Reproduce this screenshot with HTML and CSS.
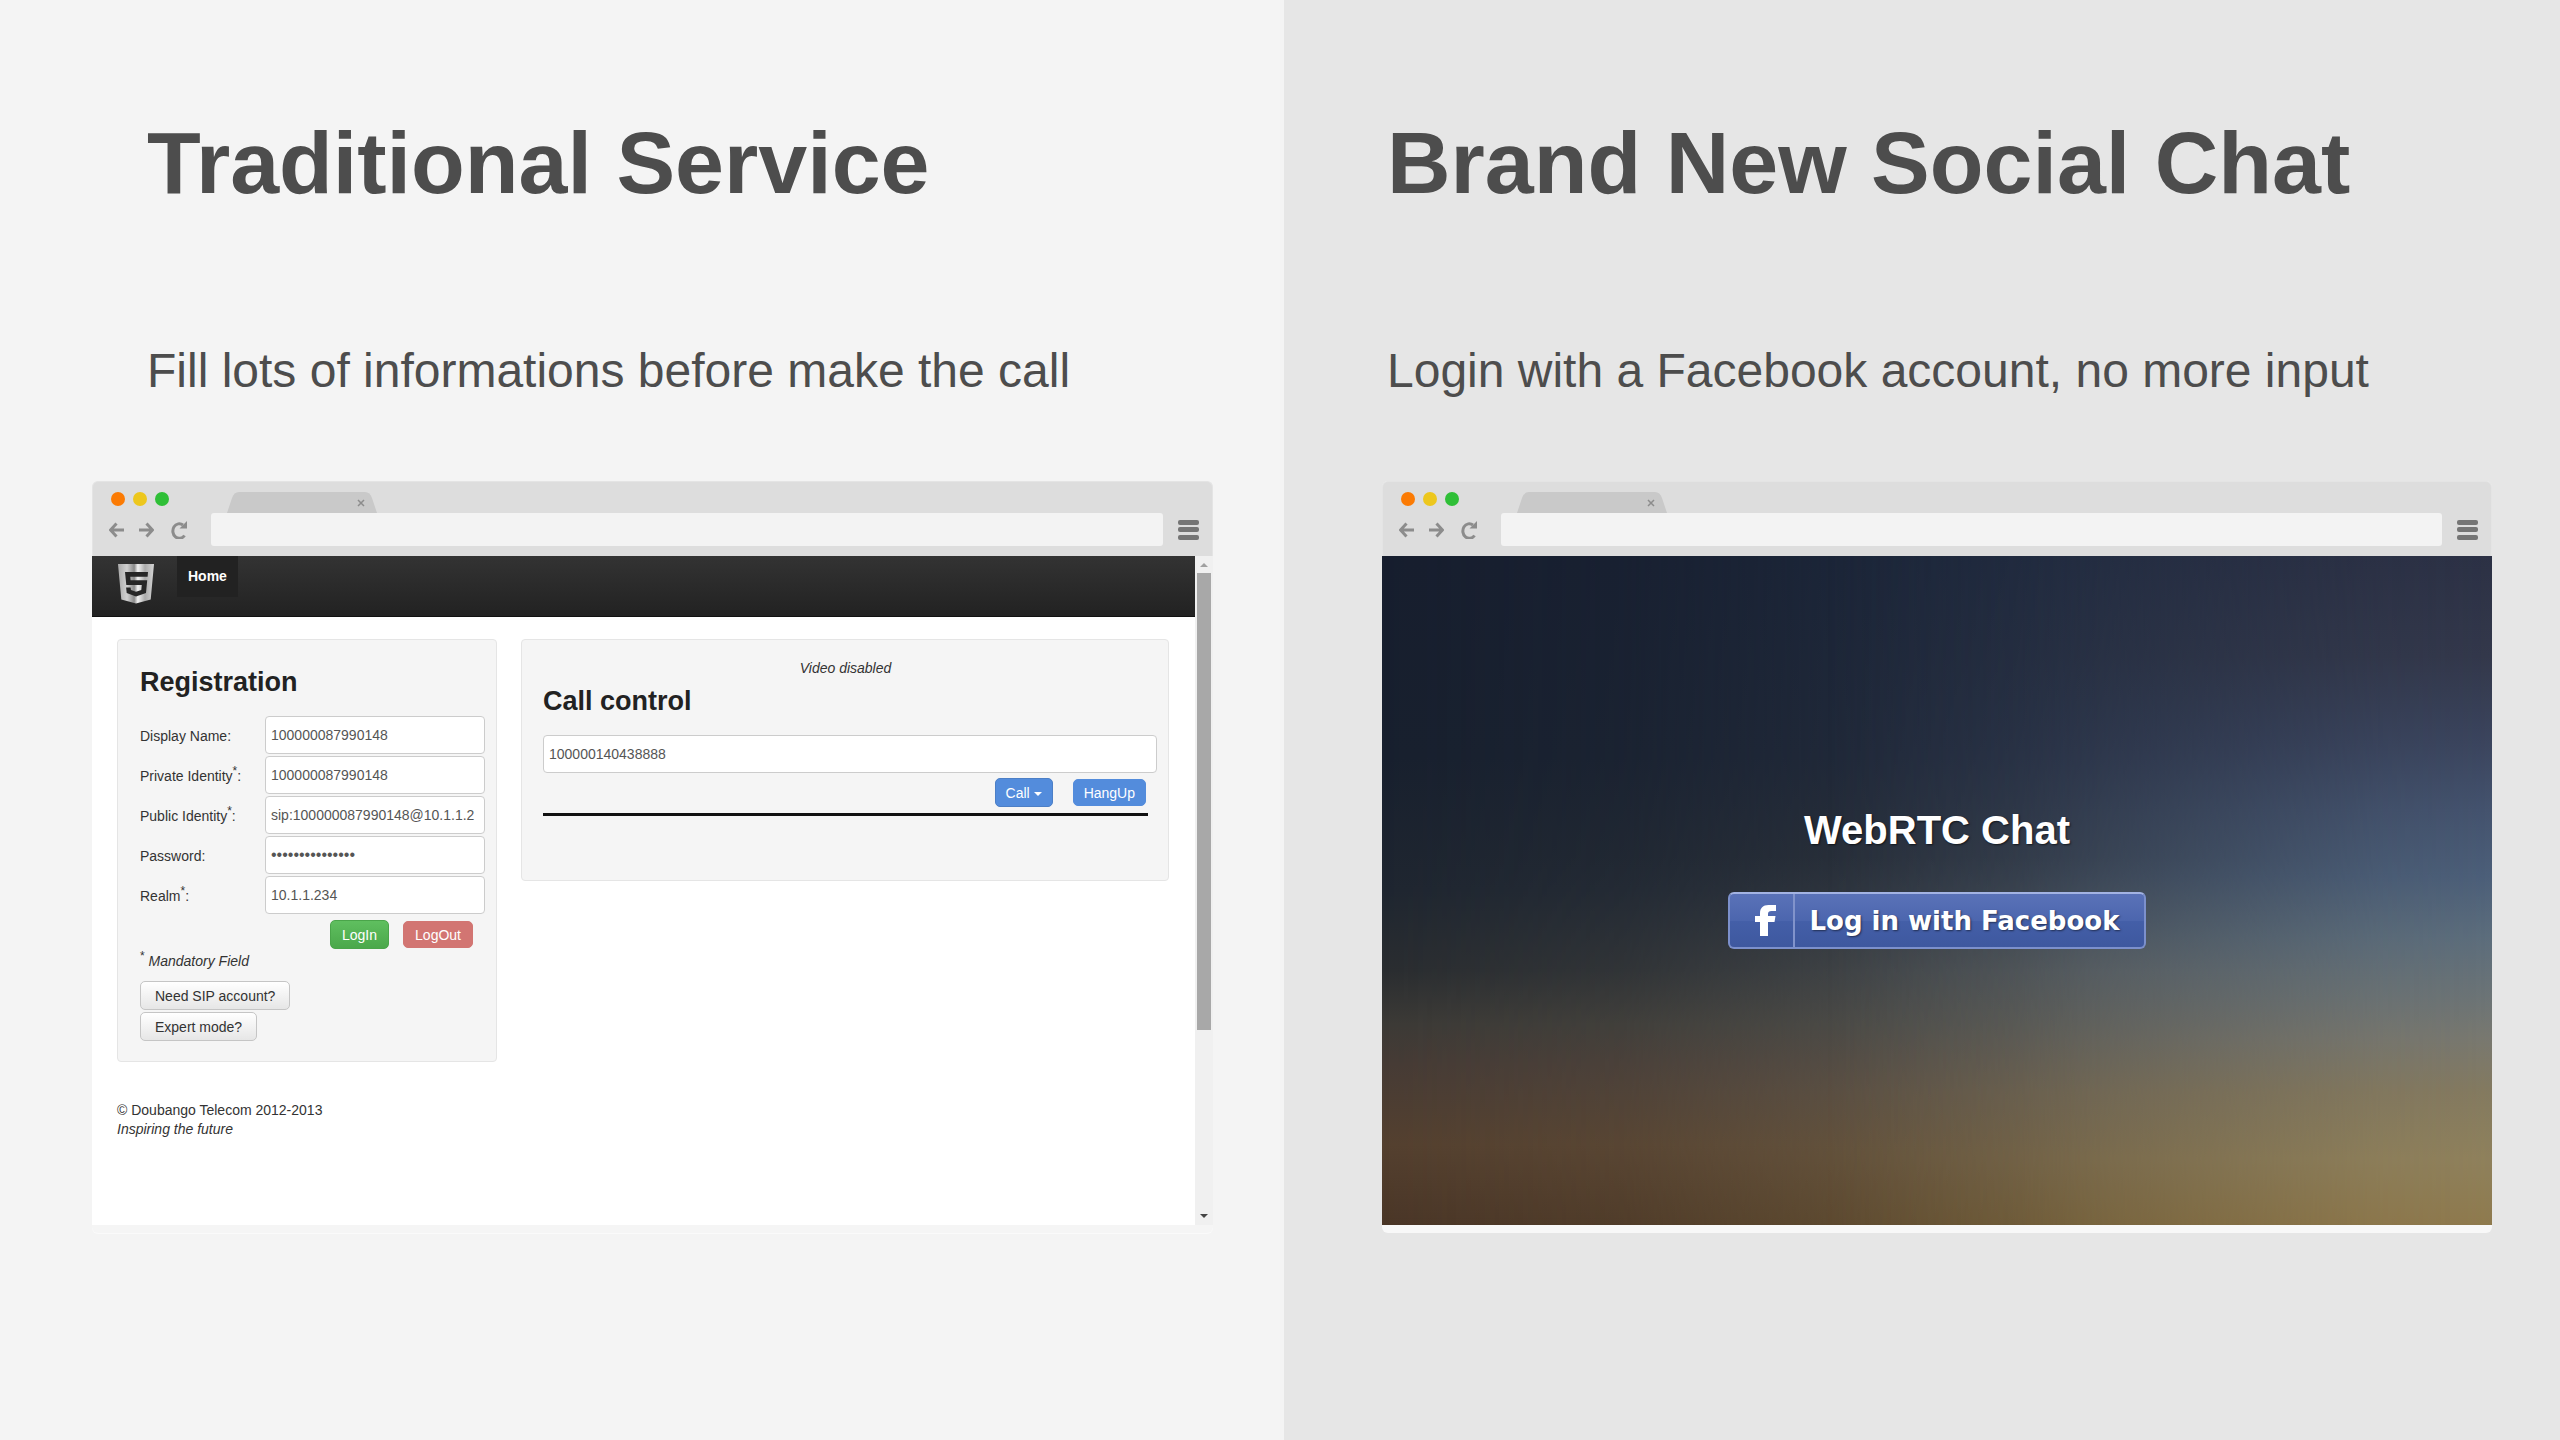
FILE: index.html
```html
<!DOCTYPE html>
<html lang="en">
<head>
    <meta charset="UTF-8">
    <meta name="viewport" content="width=device-width, initial-scale=1.0">
    <title>Traditional Service vs Brand New Social Chat</title>
    <link rel="stylesheet" href="styles.css">
</head>
<body>
    <!-- Shared icons -->
    <svg class="sprite" aria-hidden="true">
        <symbol id="icon-back" viewBox="0 0 16 16">
            <path d="M15 8H2M7.500 1.500 1.500 8l6 6.500" fill="none" stroke="currentColor" stroke-width="3"/>
        </symbol>
        <symbol id="icon-forward" viewBox="0 0 16 16">
            <path d="M1 8h13M8.500 1.500l6 6.500-6 6.500" fill="none" stroke="currentColor" stroke-width="3"/>
        </symbol>
        <symbol id="icon-reload" viewBox="0 0 18 18">
            <path d="M14.500 14.500A6.500 7.300 0 1 1 13 4" fill="none" stroke="currentColor" stroke-width="3"/>
            <path d="M17 0v7.500H9.500z" fill="currentColor"/>
        </symbol>
        <symbol id="icon-menu" viewBox="0 0 21 20">
            <rect width="21" height="5" rx="2" fill="currentColor"/>
            <rect y="7" width="21" height="5" rx="2" fill="currentColor"/>
            <rect y="15" width="21" height="5" rx="2" fill="currentColor"/>
        </symbol>
        <symbol id="icon-tab" viewBox="0 0 150 21">
            <path d="M0 21 5 6Q7 0 12 0H138Q143 0 145 6L150 21z" fill="#c9c9c9"/>
        </symbol>
        <symbol id="icon-close" viewBox="0 0 8 8">
            <path d="M1 1l6 6M7 1 1 7" stroke="currentColor" stroke-width="1.500"/>
        </symbol>
    </svg>

    <div class="comparison">
        <section class="pane pane-old">
            <h1 class="pane-title">Traditional Service</h1>
            <p class="pane-text">Fill lots of informations before make the call</p>

            <div class="browser">
                <div class="chrome">
                    <div class="tab-row">
                        <span class="dot orange"></span>
                        <span class="dot yellow"></span>
                        <span class="dot green"></span>
                        <div class="tab">
                            <svg class="tab-shape"><use href="#icon-tab"/></svg>
                            <button class="tab-close" type="button" aria-label="Close tab"><svg><use href="#icon-close"/></svg></button>
                        </div>
                    </div>
                    <div class="toolbar">
                        <button class="nav-btn" type="button" aria-label="Back"><svg><use href="#icon-back"/></svg></button>
                        <button class="nav-btn" type="button" aria-label="Forward"><svg><use href="#icon-forward"/></svg></button>
                        <button class="nav-btn reload" type="button" aria-label="Reload"><svg><use href="#icon-reload"/></svg></button>
                        <input class="address" type="text" aria-label="Address">
                        <button class="menu-btn" type="button" aria-label="Menu"><svg><use href="#icon-menu"/></svg></button>
                    </div>
                </div>

                <div class="view view-sip">
                    <div class="page">
                        <nav class="navbar">
                            <svg class="brand" viewBox="0 0 36 40" role="img" aria-label="HTML5">
                                <defs>
                                    <linearGradient id="steel" x1="0" x2="1" y1="0" y2="0">
                                        <stop offset="0" stop-color="#aaa"/>
                                        <stop offset="0.250" stop-color="#d0d0d0"/>
                                        <stop offset="0.450" stop-color="#8a8a8a"/>
                                        <stop offset="0.550" stop-color="#f2f2f2"/>
                                        <stop offset="0.750" stop-color="#aaa"/>
                                        <stop offset="1" stop-color="#d5d5d5"/>
                                    </linearGradient>
                                </defs>
                                <path d="M0 0h36l-3.300 35.500L18 39.500 3.300 35.500z" fill="url(#steel)"/>
                                <path d="M7 8h23l-.4 4.700H12.300l.3 3.600h16.600L28 29 18 32.500 8.700 29l-.6-5.500h4.500l.4 2.600 5 1.700 5.300-1.700.5-5.100H8.300z" fill="#262626"/>
                            </svg>
                            <a class="nav-link" href="#">Home</a>
                        </nav>

                        <div class="columns">
                            <form class="well registration">
                                <h2>Registration</h2>
                                <div class="fields">
                                    <label for="display-name">Display Name:</label>
                                    <input id="display-name" type="text" value="100000087990148">
                                    <label for="private-identity">Private Identity<sup>*</sup>:</label>
                                    <input id="private-identity" type="text" value="100000087990148">
                                    <label for="public-identity">Public Identity<sup>*</sup>:</label>
                                    <input id="public-identity" type="text" value="sip:100000087990148@10.1.1.2">
                                    <label for="password">Password:</label>
                                    <input id="password" type="password" value="100000087990148">
                                    <label for="realm">Realm<sup>*</sup>:</label>
                                    <input id="realm" type="text" value="10.1.1.234">
                                </div>
                                <div class="form-actions">
                                    <button class="btn btn-success" type="button">LogIn</button>
                                    <button class="btn btn-danger" type="button">LogOut</button>
                                </div>
                                <p class="mandatory"><sup>*</sup> <em>Mandatory Field</em></p>
                                <div class="links">
                                    <button class="btn" type="button">Need SIP account?</button>
                                    <button class="btn" type="button">Expert mode?</button>
                                </div>
                            </form>

                            <form class="well call">
                                <p class="video-state">Video disabled</p>
                                <h2>Call control</h2>
                                <input class="phone" type="text" aria-label="Phone number" value="100000140438888">
                                <div class="call-actions">
                                    <button class="btn btn-primary" type="button">Call <span class="caret"></span></button>
                                    <button class="btn btn-primary flat" type="button">HangUp</button>
                                </div>
                                <hr>
                            </form>
                        </div>

                        <footer class="footer">
                            <p>© Doubango Telecom 2012-2013</p>
                            <p><em>Inspiring the future</em></p>
                        </footer>
                    </div>
                    <div class="scrollbar">
                        <span class="arrow arrow-up"></span>
                        <div class="track"><div class="thumb"></div></div>
                        <span class="arrow arrow-down"></span>
                    </div>
                </div>
            </div>
        </section>

        <section class="pane pane-new">
            <h1 class="pane-title">Brand New Social Chat</h1>
            <p class="pane-text">Login with a Facebook account, no more input</p>

            <div class="browser">
                <div class="chrome">
                    <div class="tab-row">
                        <span class="dot orange"></span>
                        <span class="dot yellow"></span>
                        <span class="dot green"></span>
                        <div class="tab">
                            <svg class="tab-shape"><use href="#icon-tab"/></svg>
                            <button class="tab-close" type="button" aria-label="Close tab"><svg><use href="#icon-close"/></svg></button>
                        </div>
                    </div>
                    <div class="toolbar">
                        <button class="nav-btn" type="button" aria-label="Back"><svg><use href="#icon-back"/></svg></button>
                        <button class="nav-btn" type="button" aria-label="Forward"><svg><use href="#icon-forward"/></svg></button>
                        <button class="nav-btn reload" type="button" aria-label="Reload"><svg><use href="#icon-reload"/></svg></button>
                        <input class="address" type="text" aria-label="Address">
                        <button class="menu-btn" type="button" aria-label="Menu"><svg><use href="#icon-menu"/></svg></button>
                    </div>
                </div>

                <div class="view view-chat">
                    <h2 class="chat-title">WebRTC Chat</h2>
                    <button class="fb-login" type="button">
                        <span class="fb-icon">
                            <svg viewBox="0 0 21 31" aria-hidden="true"><path d="M5 31V17H0v-6h5V8.500C5 3 8 0 13.500 0H21v6h-4.500C14 6 13 7 13 9v2h7.500l-1 6H13v14z" fill="#fff"/></svg>
                        </span>
                        <span class="fb-text">Log in with Facebook</span>
                    </button>
                </div>
            </div>
        </section>
    </div>
</body>
</html>
```
FILE: styles.css
```css
* {
    box-sizing: border-box;
}

body {
    margin: 0;
    font-family: "Liberation Sans", Arial, sans-serif;
    color: #4d4d4d;
}

h1, h2, p {
    margin: 0;
}

button, input {
    font-family: inherit;
    margin: 0;
}

svg {
    display: block;
}

.sprite {
    position: absolute;
    width: 0;
    height: 0;
}

/* Two halves */
.comparison {
    display: grid;
    grid-template-columns: 321fr 319fr;
    min-height: 100vh;
}

.pane {
    padding-top: 113px;
}

.pane-old {
    padding-left: 92px;
    padding-right: 71px;
    background: #f4f4f4;
}

.pane-new {
    padding-left: 98px;
    padding-right: 68px;
    background: #e6e6e6;
}

.pane-old .pane-title,
.pane-old .pane-text {
    padding-left: 55px;
}

.pane-new .pane-title,
.pane-new .pane-text {
    padding-left: 5px;
}

.pane-title {
    font-size: 88px;
    line-height: 100px;
    margin-bottom: 130px;
}

.pane-text {
    font-size: 48px;
    line-height: 56px;
    margin-bottom: 82px;
}

/* Browser window */
.browser {
    border-radius: 6px;
    padding-bottom: 8px;
    background: #f8f8f8;
}

.pane-old .browser {
    background: #f5f5f5;
    box-shadow: 0 1px 0 #fafafa;
}

.chrome {
    background: #dddddd;
    border: 1px solid #e4e4e4;
    border-bottom: 0;
    border-radius: 6px 6px 0 0;
    height: 75px;
}

.tab-row {
    display: flex;
    align-items: flex-start;
    gap: 8px;
    height: 31px;
    padding: 10px 0 0 18px;
}

.dot {
    width: 14px;
    height: 14px;
    border-radius: 50%;
}

.orange { background: #fb7b04; }
.yellow { background: #edc71d; }
.green { background: #2fbf37; }

.tab {
    display: flex;
    align-items: center;
    justify-content: flex-end;
    position: relative;
    width: 150px;
    height: 21px;
    margin-left: 50px;
    padding-right: 12px;
}

.tab-shape {
    position: absolute;
    top: 0;
    left: 0;
    width: 150px;
    height: 21px;
}

.tab-close,
.nav-btn,
.menu-btn {
    position: relative;
    padding: 0;
    border: 0;
    background: none;
    color: #8c8c8c;
}

.tab-close svg {
    width: 8px;
    height: 8px;
}

.toolbar {
    display: flex;
    align-items: center;
    height: 33px;
    padding: 0 13px 0 16px;
}

.nav-btn {
    margin-right: 13px;
}

.nav-btn svg {
    width: 16px;
    height: 16px;
}

.reload {
    margin: 0 23px 0 3px;
}

.reload svg {
    width: 18px;
    height: 18px;
}

.address {
    flex: 1;
    min-width: 0;
    height: 33px;
    border: 0;
    border-radius: 3px;
    background: #f3f3f3;
}

.menu-btn {
    margin-left: 15px;
    color: #757575;
}

.menu-btn svg {
    width: 21px;
    height: 20px;
}

.view {
    display: flex;
    min-height: 669px;
}

/* SIP demo page */
.page {
    flex: 1;
    background: #fff;
    color: #333;
    font-size: 14px;
    line-height: 19px;
}

.navbar {
    display: flex;
    align-items: flex-start;
    height: 61px;
    padding-left: 26px;
    background: linear-gradient(#333, #222);
    border-bottom: 1px solid #111;
}

.brand {
    width: 36px;
    height: 40px;
    margin-top: 8px;
}

.nav-link {
    margin-left: 23px;
    padding: 11px 11px;
    background: #222;
    color: #fff;
    font-weight: bold;
    text-decoration: none;
}

.columns {
    display: flex;
    align-items: flex-start;
    gap: 24px;
    padding: 22px 26px 0 25px;
}

.well {
    border: 1px solid #e5e5e5;
    border-radius: 4px;
    background: #f5f5f5;
}

.well h2 {
    font-size: 27px;
    line-height: 40px;
    margin-bottom: 14px;
    color: #222;
}

.well input {
    height: 38px;
    padding: 0 5px;
    border: 1px solid #ccc;
    border-radius: 4px;
    background: #fff;
    color: #555;
    font-size: 14px;
}

.well input[type="password"] {
    font-size: 16px;
}

.registration {
    width: 380px;
    padding: 22px 11px 20px 22px;
}

.fields {
    display: grid;
    grid-template-columns: 125px 1fr;
    gap: 2px 0;
    align-items: center;
}

.fields label {
    padding-top: 3px;
}

.fields input {
    width: 100%;
}

sup {
    font-size: 12px;
    line-height: 0;
}

.btn {
    height: 29px;
    padding: 0 11px;
    border: 1px solid #c5c5c5;
    border-radius: 5px;
    background: linear-gradient(#fff, #e6e6e6);
    color: #333;
    font-size: 14px;
    white-space: nowrap;
}

.form-actions {
    display: flex;
    align-items: center;
    justify-content: flex-end;
    gap: 14px;
    padding: 6px 12px 3px 0;
}

.btn-success {
    border-color: #4aa54a;
    background: linear-gradient(#5fbf5f, #4ba84b);
    color: #fff;
}

.btn-danger {
    height: 27px;
    border-color: #d27572;
    background: #d27572;
    color: #fff;
}

.links {
    display: flex;
    flex-direction: column;
    align-items: flex-start;
    gap: 2px;
    margin-top: 10px;
}

.links .btn {
    padding: 0 14px;
}

.call {
    flex: 1;
    padding: 18px 20px 64px 21px;
}

.video-state {
    font-style: italic;
    line-height: 20px;
    margin-bottom: 3px;
    text-align: center;
}

.call .phone {
    display: block;
    width: calc(100% + 9px);
}

.call-actions {
    display: flex;
    align-items: center;
    justify-content: flex-end;
    gap: 20px;
    padding: 5px 2px 6px 0;
}

.btn-primary {
    padding: 0 10px;
    border-color: #4c7fc6;
    background: #538cdc;
    color: #fff;
}

.flat {
    height: 27px;
    border-color: #538cdc;
}

.caret {
    display: inline-block;
    vertical-align: middle;
    border-top: 4px solid #fff;
    border-left: 4px solid transparent;
    border-right: 4px solid transparent;
}

.call hr {
    margin: 0;
    border: 0;
    border-top: 3px solid #111;
}

.footer {
    padding: 39px 25px 86px;
}

.scrollbar {
    display: flex;
    flex-direction: column;
    align-items: center;
    width: 18px;
    background: #f0f0f0;
}

.arrow {
    border-left: 4px solid transparent;
    border-right: 4px solid transparent;
}

.arrow-up {
    margin: 7px 0 6px;
    border-bottom: 4px solid #a0a0a0;
}

.arrow-down {
    margin: 6px 0 7px;
    border-top: 4px solid #444;
}

.track {
    flex: 1;
    width: 14px;
}

.thumb {
    height: 72%;
    background: #a8a8a8;
}

/* Chat page */
.view-chat {
    position: relative;
    flex-direction: column;
    align-items: center;
    padding-top: 251px;
    background: linear-gradient(#171e2e 0%, #18202e 30%, #1f2630 50%, #2a2d30 62%, #3c3a36 70%, #463b35 76%, #54402f 88%, #4a3627 100%);
}

.view-chat::before,
.view-chat::after {
    content: "";
    position: absolute;
    inset: 0;
}

.view-chat::before {
    background: linear-gradient(#1f2b40 0%, #262f41 30%, #2f3641 45%, #40464e 55%, #4e5255 62%, #565652 70%, #665d4e 80%, #6e5e44 90%, #6c5937 100%);
    mask-image: linear-gradient(to right, transparent, rgba(0,0,0,0.2) 22%, rgba(0,0,0,0.7) 48%, #000 65%);
}

.view-chat::after {
    background: linear-gradient(#2c3145 0%, #33384b 15%, #3b455e 28%, #44536e 38%, #4c5f79 48%, #5c6d7c 57%, #6c7476 66%, #787870 72%, #847a60 80%, #8f815c 90%, #8f7a4e 100%);
    mask-image: linear-gradient(to right, transparent 40%, rgba(0,0,0,0.2) 57%, rgba(0,0,0,0.6) 75%, rgba(0,0,0,0.9) 90%, #000);
}

.chat-title,
.fb-login {
    position: relative;
    z-index: 1;
}

.chat-title {
    color: #fff;
    font-size: 40px;
    line-height: 46px;
    text-shadow: 1px 1px 2px rgba(0,0,0,0.6);
}

.fb-login {
    display: flex;
    align-items: center;
    height: 57px;
    margin-top: 39px;
    padding: 0;
    border: 2px solid #7c90cc;
    border-top-color: #a3b3e3;
    border-radius: 6px;
    background: linear-gradient(#5a72b8, #4c66ae 50%, #445fa8 51%, #3e589f);
    color: #fff;
}

.fb-icon {
    display: flex;
    align-items: center;
    height: 100%;
    padding: 0 17px 0 25px;
    border-right: 2px solid #8193cb;
}

.fb-icon svg {
    width: 21px;
    height: 31px;
}

.fb-text {
    padding: 0 25px 0 15px;
    font-family: "DejaVu Sans", Verdana, sans-serif;
    font-size: 26px;
    font-weight: bold;
    text-shadow: 1px 1px 2px rgba(0,0,0,0.5);
}
```
